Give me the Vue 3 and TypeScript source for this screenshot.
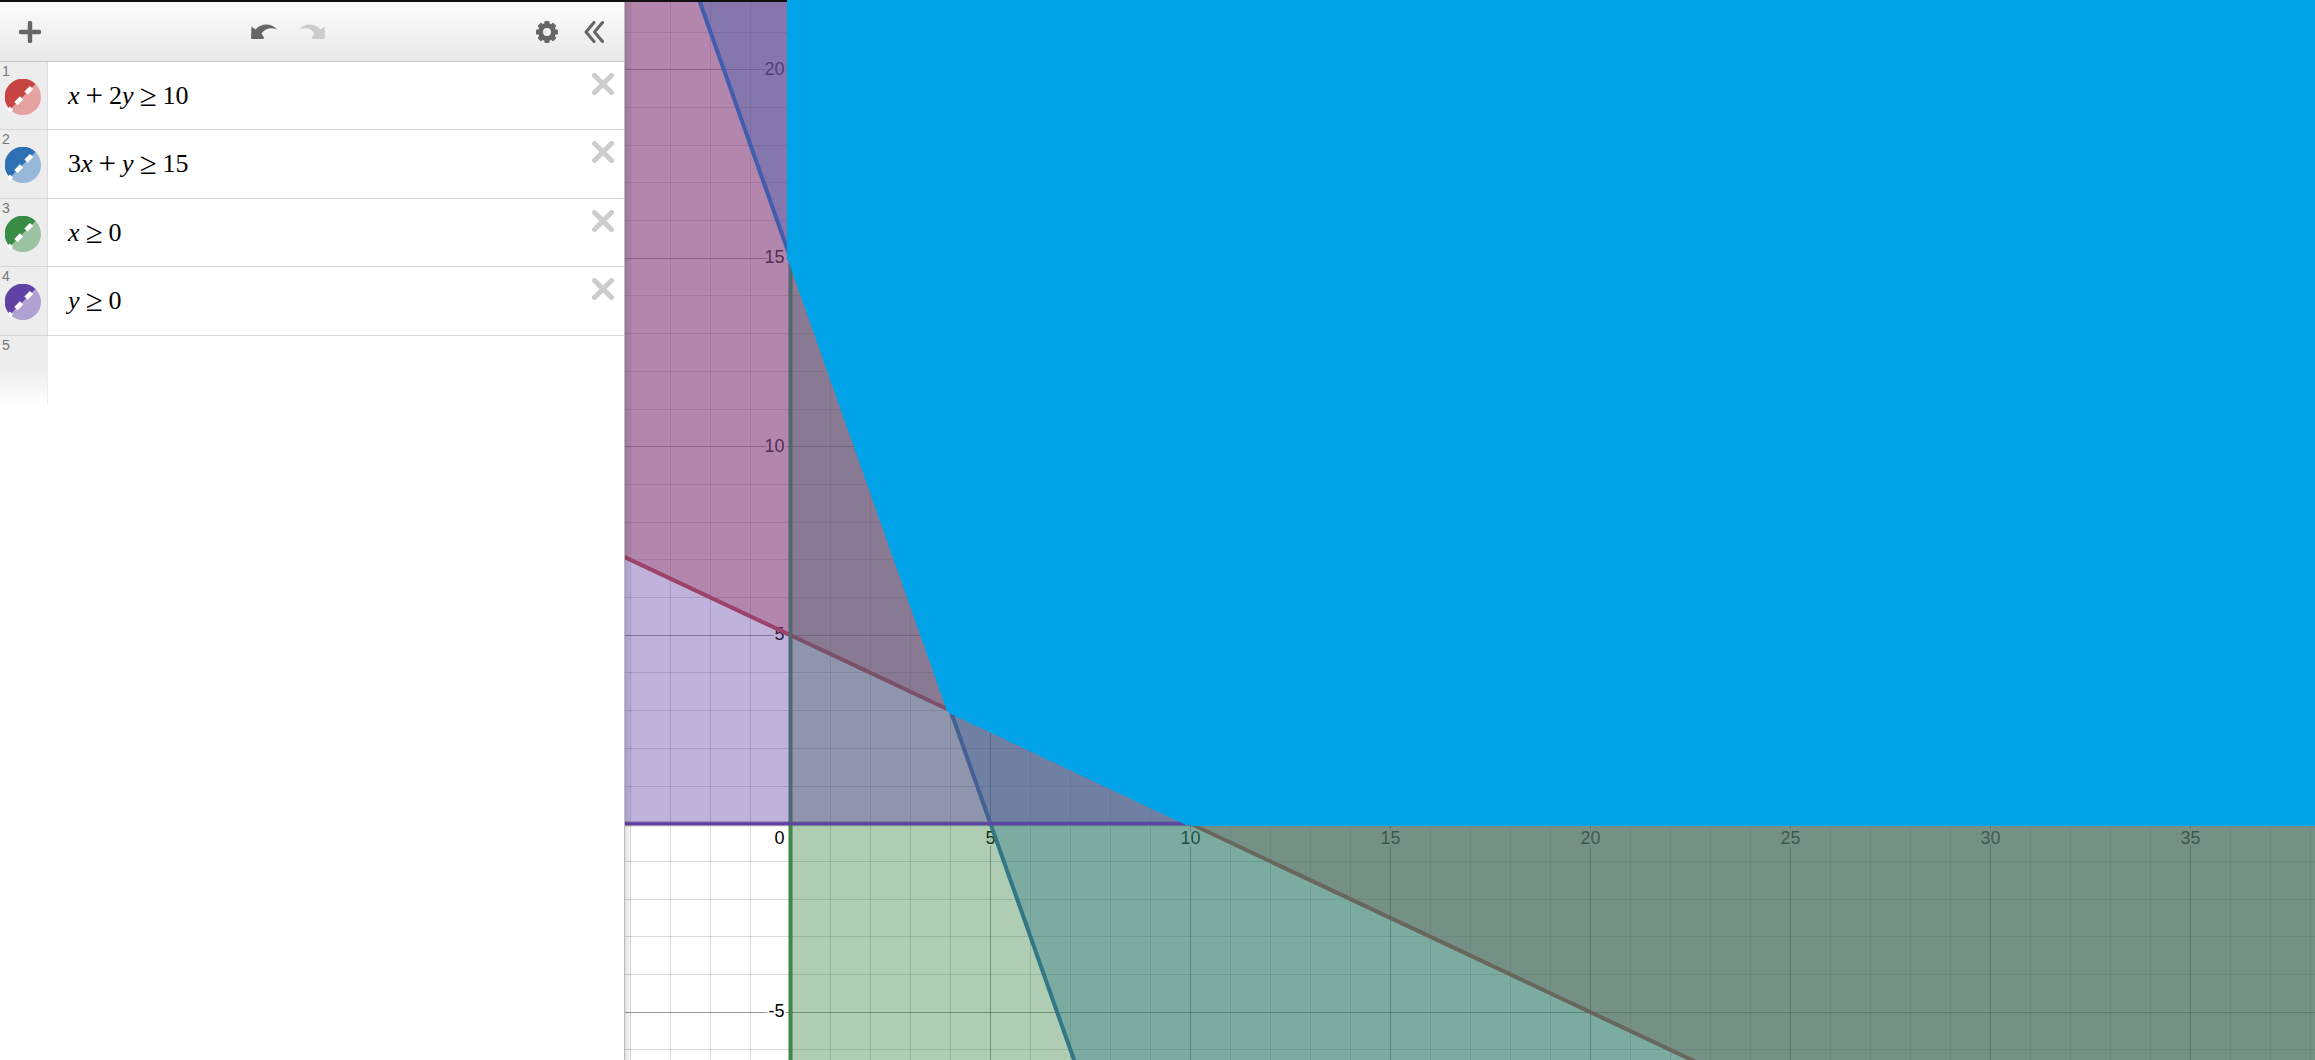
<script setup lang="ts">
type Token = { text: string; kind: 'var' | 'num' | 'op' }
type Expression = { label: string; color: string; tint: string; tokens: Token[] }

const v = (text: string): Token => ({ text, kind: 'var' })
const n = (text: string): Token => ({ text, kind: 'num' })
const o = (text: string): Token => ({ text, kind: 'op' })

const expressions: Expression[] = [
  { label: 'x + 2y ≥ 10', color: '#c74440', tint: '#e4a2a0', tokens: [v('x'), o('+'), n('2'), v('y'), o('≥'), n('10')] },
  { label: '3x + y ≥ 15', color: '#2d70b3', tint: '#97b8d9', tokens: [n('3'), v('x'), o('+'), v('y'), o('≥'), n('15')] },
  { label: 'x ≥ 0', color: '#388c46', tint: '#9cc3a1', tokens: [v('x'), o('≥'), n('0')] },
  { label: 'y ≥ 0', color: '#6042a6', tint: '#b0a1d3', tokens: [v('y'), o('≥'), n('0')] },
]

// Graph-space to pixel mapping, measured from the top left of the graph paper.
const origin = { x: 165.5, y: 821.7 }
const unit = { x: 40, y: 37.7 }
const px = (x: number) => origin.x + x * unit.x
const py = (y: number) => origin.y - y * unit.y
const snap = (value: number) => Math.floor(value) + 0.5
const points = (list: [number, number][]) => list.map(([x, y]) => `${px(x)},${py(y)}`).join(' ')

const range = (from: number, to: number) => Array.from({ length: to - from + 1 }, (_, i) => from + i)
const columns = range(-4, 100).filter((i) => i !== 0)
const rows = range(-40, 21).filter((i) => i !== 0)
const xLabels = [5, 10, 15, 20, 25, 30, 35]
const yLabels = [-5, 5, 10, 15, 20]

const FAR = 120
const regions = [
  {
    color: '#c74440',
    shade: '#c74440',
    weight: 4,
    fill: points([[-FAR, 5 + FAR / 2], [FAR, 5 - FAR / 2], [FAR, FAR]]),
    edge: points([[-FAR, 5 + FAR / 2], [FAR, 5 - FAR / 2]]),
  },
  {
    color: '#2d70b3',
    shade: '#2d70b3',
    weight: 4,
    fill: points([[-20, 75], [45, -120], [FAR, -120], [FAR, 75]]),
    edge: points([[-20, 75], [45, -120]]),
  },
  {
    color: '#388c46',
    shade: '#388340',
    weight: 3,
    fill: points([[0, FAR], [0, -FAR], [FAR, -FAR], [FAR, FAR]]),
    edge: points([[0, FAR], [0, -FAR]]),
  },
  {
    color: '#6042a6',
    shade: '#6042a6',
    weight: 3,
    fill: points([[-FAR, 0], [FAR, 0], [FAR, FAR], [-FAR, FAR]]),
    edge: points([[-FAR, 0], [FAR, 0]]),
  },
]
</script>

<template>
  <main class="app">
    <aside class="panel">
      <header class="toolbar">
        <button class="tool" type="button" aria-label="Add item">
          <svg width="22" height="22" viewBox="0 0 22 22"><path d="M11 2V20M2 11H20" stroke="#666" stroke-width="4.4" stroke-linecap="round" /></svg>
        </button>
        <div class="history">
          <button class="tool" type="button" aria-label="Undo">
            <svg width="26" height="16" viewBox="0 0 26 16"><path d="M.5 2.500L4.500 5.500C10-.5 20-1.500 26 5.500C20 2.800 14 4.500 10.500 9.500L13 13.500Q13 15 11.500 15H1Q0 15 0 14Z" fill="#666" /></svg>
          </button>
          <button class="tool" type="button" aria-label="Redo" disabled>
            <svg width="26" height="16" viewBox="0 0 26 16"><path d="M25.500 2.500L21.500 5.500C16-.5 6-1.500 0 5.500C6 2.800 12 4.500 15.500 9.500L13 13.500Q13 15 14.500 15H25Q26 15 26 14Z" fill="#ccc" /></svg>
          </button>
        </div>
        <div class="options">
          <button class="tool" type="button" aria-label="Edit list">
            <svg width="22" height="22" viewBox="-11 -11 22 22">
              <circle r="6.500" fill="none" stroke="#666" stroke-width="5" />
              <g fill="#666"><rect v-for="a in 8" :key="a" x="-2.600" y="-11" width="5.200" height="5" rx="1.200" :transform="`rotate(${a * 45})`" /></g>
            </svg>
          </button>
          <button class="tool" type="button" aria-label="Hide list">
            <svg width="20" height="22" viewBox="0 0 20 22"><path d="M10 1.500L2 11L10 20.500M18.500 1.500L10.500 11L18.500 20.500" fill="none" stroke="#666" stroke-width="3" stroke-linecap="round" stroke-linejoin="round" /></svg>
          </button>
        </div>
      </header>

      <ol class="list">
        <li v-for="(item, i) in expressions" :key="item.label" class="row">
          <div class="tab">
            <span class="index">{{ i + 1 }}</span>
            <button class="swatch" type="button" :aria-label="`Toggle ${item.label}`">
              <svg width="36" height="36" viewBox="0 0 36 36">
                <circle cx="18" cy="18" r="18" :fill="item.tint" />
                <path d="M5 30.500A18 18 0 0 1 30.500 5Z" :fill="item.color" />
                <path d="M3.700 32L28 7" stroke="#fff" stroke-width="4.600" stroke-dasharray="8 6.400" stroke-dashoffset="4" />
              </svg>
            </button>
          </div>
          <div class="math" role="math" :aria-label="item.label">
            <span v-for="(t, k) in item.tokens" :key="k" :class="t.kind">{{ t.text }}</span>
          </div>
          <button class="remove" type="button" :aria-label="`Delete ${item.label}`">
            <svg width="22" height="22" viewBox="0 0 22 22"><path d="M2.500 2.500L19.500 19.500M19.500 2.500L2.500 19.500" stroke="#ccc" stroke-width="5" stroke-linecap="round" /></svg>
          </button>
        </li>
      </ol>
      <div class="next"><span class="index">5</span></div>
    </aside>

    <section class="paper">
      <svg class="graph" role="img" aria-label="Graph of the four inequalities">
        <defs>
          <linearGradient id="paper-edge"><stop offset="0" stop-opacity=".12" /><stop offset="1" stop-opacity="0" /></linearGradient>
        </defs>
        <g class="grid">
          <line v-for="c in columns" :key="`c${c}`" :class="{ major: c % 5 === 0 }" :x1="snap(px(c))" :x2="snap(px(c))" y1="0" y2="100%" />
          <line v-for="r in rows" :key="`r${r}`" :class="{ major: r % 5 === 0 }" x1="0" x2="100%" :y1="snap(py(r))" :y2="snap(py(r))" />
        </g>
        <line class="axis" :x1="px(0)" :x2="px(0)" y1="0" y2="100%" />
        <line class="axis" x1="0" x2="100%" :y1="py(0)" :y2="py(0)" />
        <g class="labels">
          <text v-for="l in xLabels" :key="`x${l}`" :x="px(l)" :y="py(0) + 20" text-anchor="middle">{{ l }}</text>
          <text v-for="l in yLabels" :key="`y${l}`" :x="px(0) - 6" :y="py(l) + 5" text-anchor="end">{{ l }}</text>
          <text :x="px(0) - 6" :y="py(0) + 20" text-anchor="end">0</text>
        </g>
        <g v-for="r in regions" :key="r.color">
          <polygon :points="r.fill" :fill="r.shade" fill-opacity=".4" />
          <polyline :points="r.edge" fill="none" :stroke="r.color" :stroke-width="r.weight" />
        </g>
        <rect width="7" height="100%" fill="url(#paper-edge)" />
      </svg>
      <svg class="solution" aria-hidden="true">
        <polygon points="162,0 162,259 164,263 322,711 326,714 561,825 571,826 9000,826 9000,0" fill="#00a2e8" shape-rendering="crispEdges" />
      </svg>
    </section>
  </main>
</template>

<style>
body { margin: 0; }
</style>

<style scoped>
.app { display: flex; height: 100vh; box-sizing: border-box; border-top: 2px solid #111; background: #fff; font-family: "Liberation Sans", Arial, sans-serif; }
button { padding: 0; border: 0; background: none; cursor: pointer; }
svg { display: block; }
.panel { flex: 0 0 624px; border-right: 1px solid #bbb; background: #fff; }
.toolbar { display: flex; align-items: center; height: 59px; padding: 0 20px 0 19px; border-bottom: 1px solid #c4c4c4; background: linear-gradient(#fcfcfc, #e9e9e9); }
.history { display: flex; gap: 22px; margin: 0 auto 0 210px; }
.options { display: flex; gap: 26px; }
.list { display: grid; grid-template-rows: 68px 69px 68px 69px; margin: 0; padding: 0; list-style: none; }
.row { display: flex; border-bottom: 1px solid #d6d6d6; }
.tab { display: flex; flex-direction: column; align-items: flex-start; width: 47px; border-right: 1px solid #ddd; background: #ededed; }
.index { height: 17px; padding-left: 2px; color: #777; font-size: 14px; line-height: 18px; }
.swatch { margin-left: 5px; }
.math { display: flex; flex: 1; align-items: center; padding-left: 20px; font-family: "Liberation Serif", "Times New Roman", serif; font-size: 26px; line-height: 32px; color: #000; }
.var { font-style: italic; }
.op { padding: 0 6px; font-size: 31px; }
.remove { align-self: flex-start; margin: 11px 10px 0 0; }
.next { width: 47px; height: 68px; border-right: 1px solid #eee; background: linear-gradient(#ededed 50%, #fff); }
.next .index { display: block; }
.paper { position: relative; flex: 1; min-width: 0; }
.graph { width: 100%; height: 100%; }
/* The solution area runs over the top border of the window. */
.solution { position: absolute; top: -2px; left: 0; width: 100%; height: calc(100% + 2px); }
.grid line { stroke: #000; stroke-opacity: .15; }
.grid .major { stroke-opacity: .4; }
.axis { stroke: #000; stroke-width: 5; stroke-opacity: .3; }
.labels text { font-size: 18px; fill: #000; stroke: #fff; stroke-width: 4px; paint-order: stroke; stroke-linejoin: round; }
</style>
